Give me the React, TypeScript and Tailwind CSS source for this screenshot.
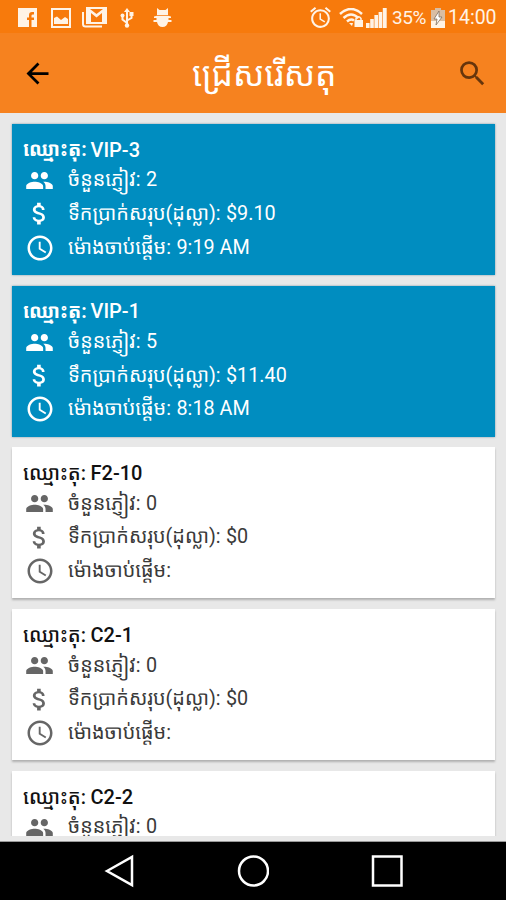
import React from "react";
import {
  MdAccessTime,
  MdAlarm,
  MdArrowBack,
  MdAttachMoney,
  MdPeople,
  MdSearch,
} from "react-icons/md";

const tables = [
  { name: "VIP-3", guests: 2, total: "$9.10", start: "9:19 AM", active: true },
  { name: "VIP-1", guests: 5, total: "$11.40", start: "8:18 AM", active: true },
  { name: "F2-10", guests: 0, total: "$0", start: "", active: false },
  { name: "C2-1", guests: 0, total: "$0", start: "", active: false },
  { name: "C2-2", guests: 0, total: "$0", start: "", active: false },
];

interface RowProps {
  icon: React.ReactNode;
  label: string;
  labelWidth: string;
  value: string | number;
}

function Row({ icon, label, labelWidth, value }: RowProps) {
  return (
    <div className="flex h-[33.6px] items-center whitespace-nowrap text-[19.8px] leading-none">
      <div className="flex w-[56px] shrink-0 pl-[13px]">{icon}</div>
      <span className={`${labelWidth} shrink-0`}>{label}</span>
      <span>{value}</span>
    </div>
  );
}

function TableCard({ table }: { table: (typeof tables)[number] }) {
  return (
    <div
      className={`h-[151px] shrink-0 overflow-hidden pt-3 ${
        table.active
          ? "bg-[#008dc0] text-white shadow-[0_0_2px_#7a9aa8]"
          : "bg-white text-[#3a3a3a] shadow-[0_2px_2px_#b0b0b0]"
      }`}
    >
      <div
        className={`flex h-[27.6px] items-center whitespace-nowrap pl-[11px] text-[20px] font-medium leading-none ${
          table.active ? "text-white" : "text-[#111111]"
        }`}
      >
        <span className={`w-[67.5px] shrink-0 ${table.active ? "text-[19.5px] font-bold" : ""}`}>ឈ្មោះតុ:</span>
        <span>{table.name}</span>
      </div>
      <div className={table.active ? "[&_svg]:text-white" : "[&_svg]:text-[#666666]"}>
        <Row icon={<MdPeople size={29} />} label="ចំនួនភ្ញៀវ:" labelWidth="w-[78px]" value={table.guests} />
        <Row icon={<MdAttachMoney size={29} />} label="ទឹកប្រាក់សរុប(ដុល្លា):" labelWidth="w-[158px]" value={table.total} />
        <Row icon={<MdAccessTime size={30} />} label="ម៉ោងចាប់ផ្តើម:" labelWidth="w-[108.5px]" value={table.start} />
      </div>
    </div>
  );
}

function StatusBar() {
  return (
    <div className="flex h-[33px] shrink-0 items-center bg-[#f77a0c] pl-[18px] pr-[9px] pt-[2px] text-[#fff3e6]">
      <svg width="19" height="19" viewBox="0 0 19 19">
        <path fill="currentColor" d="M0 0H19V19H13.500V12H16V9.500H13.500V7.500Q13.500 6.500 15 6.500H16V4H14Q11 4 11 7V9.500H9V12H11V19H0Z" />
      </svg>
      <svg className="ml-[14px]" width="20" height="20" viewBox="0 0 20 20">
        <rect x="1" y="1" width="18" height="18" fill="none" stroke="currentColor" strokeWidth="2" />
        <path fill="currentColor" d="M3 16V10L6 8.500L10 12L14 9L17 11V16Z" />
      </svg>
      <svg className="ml-[11px]" width="25" height="21" viewBox="0 0 25 21" fill="none" stroke="currentColor">
        <path d="M1 5V17Q1 19.500 3.500 19.500H20" strokeWidth="2" />
        <path d="M4 0H25V17H4ZM9 15H20V6L14.500 10.500L9 6ZM8 2L14.500 7L21 2Z" fill="currentColor" fillRule="evenodd" stroke="none" />
      </svg>
      <svg className="ml-[13px]" width="14" height="20" viewBox="0 0 14 20" fill="currentColor">
        <path d="M7 0L10 4H4Z" />
        <path d="M7 3V17M7 15L2.500 11.500V8M7 12.500L11.500 10V6" fill="none" stroke="currentColor" strokeWidth="2" />
        <circle cx="7" cy="17.500" r="2.200" />
        <circle cx="2.500" cy="7.500" r="2" />
        <path d="M9.500 4H13.500V8H9.500Z" />
      </svg>
      <svg className="ml-[19px]" width="19" height="20" viewBox="0 0 19 20" fill="currentColor">
        <path d="M4 0L6.500 2H12.500L15 0V7H4Z" />
        <path d="M4 7.800H15L18 8.500V10H15.500V12H18.500V14H15Q14 19 9.500 19Q5 19 4 14H.5V12H3.500V10H1V8.500Z" />
      </svg>
      <MdAlarm className="ml-auto" size={25} />
      <svg className="ml-[6px]" width="25" height="20" viewBox="0 0 25 20" fill="none" stroke="currentColor">
        <path d="M1 6Q12 -4 23 6M4.500 10Q12 3 19.500 10M8 13.500Q12 10 15 12.500" strokeWidth="2.500" />
        <path d="M17 12V10.500Q19.500 7 22 10.500V12" strokeWidth="1.500" />
        <path d="M15.500 12H24V19H15.500ZM10 15L13 18L14 15Z" fill="currentColor" stroke="none" />
      </svg>
      <svg className="ml-[2px]" width="21" height="20" viewBox="0 0 21 20" fill="currentColor">
        <path d="M0 15H3.600V20H0ZM4.200 11H7.800V20H4.200ZM8.400 7H12V20H8.400ZM12.600 4H16.200V20H12.600ZM16.800 0H20.700V20H16.800Z" />
      </svg>
      <span className="ml-[5px] w-[34px] whitespace-nowrap text-[19px] leading-none tracking-[-0.4px]">35%</span>
      <svg className="ml-[5px]" width="14" height="20" viewBox="0 0 14 20">
        <path d="M4 0H10V2H14V20H0V2H4Z" fill="#d9bda3" />
        <path d="M0 13H14V20H0Z" fill="#fff3e6" />
        <path d="M8 3L3 11H6L5 17L11 9H8Z" fill="#fff" stroke="#806f60" strokeWidth="0.800" />
      </svg>
      <span className="ml-[3px] w-[49px] whitespace-nowrap text-[19.500px] leading-none">14:00</span>
    </div>
  );
}

function NavBar() {
  return (
    <div className="flex h-[58px] shrink-0 items-center justify-center gap-[102px] bg-black">
      <svg width="32" height="34" viewBox="0 0 32 34" fill="none" stroke="white" strokeWidth="2.500">
        <path d="M4 17L29 3V31Z" />
      </svg>
      <svg width="32" height="34" viewBox="0 0 32 34" fill="none" stroke="white" strokeWidth="2.500">
        <circle cx="16.500" cy="17" r="14.500" />
      </svg>
      <svg width="32" height="34" viewBox="0 0 32 34" fill="none" stroke="white" strokeWidth="2.500">
        <rect x="2" y="2.500" width="28.500" height="29" />
      </svg>
    </div>
  );
}

export default function App() {
  return (
    <div className="flex h-[900px] w-[506px] flex-col overflow-hidden bg-[#e8e8e8] font-['Roboto','Noto_Sans_Khmer','Noto_Sans',sans-serif]">
      <StatusBar />
      <header className="flex h-[80px] shrink-0 items-center bg-[#f6821f] pl-[21px] pr-[17px]">
        <MdArrowBack size={33} className="shrink-0 text-black" />
        <h1 className="ml-[138px] whitespace-nowrap pt-1 text-[33.8px] leading-none text-white">ជ្រើសរើសតុ</h1>
        <MdSearch size={33} className="ml-auto shrink-0 text-[#66350c]" />
      </header>
      <main className="flex h-[723px] shrink-0 flex-col gap-[10.700px] overflow-hidden pl-3 pr-[11px] pt-[11px]">
        {tables.map((table) => (
          <TableCard key={table.name} table={table} />
        ))}
      </main>
      <div className="h-[6px] shrink-0 border-b border-[#999999] bg-[#e8e8e8]" />
      <NavBar />
    </div>
  );
}
